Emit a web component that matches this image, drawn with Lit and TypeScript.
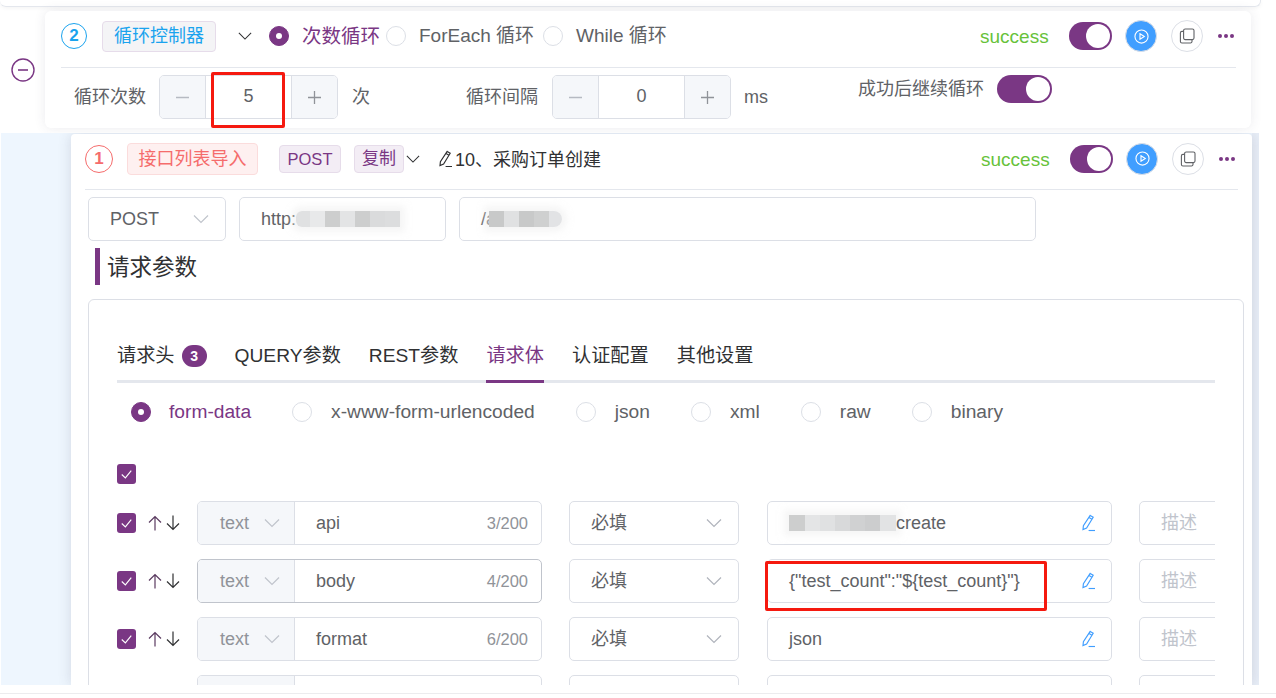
import { LitElement, html, css, svg, nothing } from "lit";
import { customElement } from "lit/decorators.js";

const chevron = (cls = "") => html`<svg class="chev ${cls}" viewBox="0 0 16 16"><polyline points="1,4.5 8,11.5 15,4.5" fill="none" stroke="currentColor" stroke-width="1.2"/></svg>`;
const pencil = (cls = "") => html`<svg class="pencil ${cls}" viewBox="0 0 16 18" fill="none" stroke="currentColor" stroke-width="1.15"><path d="M10.2 1.4 L13.2 3.2 L6.6 14 L3 15.6 L3.4 11.8 Z"/><path d="M9 3.4 L12 5.3"/><path d="M8.6 16.5 H15"/></svg>`;
const copyIcon = html`<svg class="copy" viewBox="0 0 16 16" fill="none" stroke="#606266" stroke-width="1.1"><rect x="4.6" y="1" width="10.4" height="10.6" rx="1.6"/><path d="M4.6 3.4 H3 A1.6 1.6 0 0 0 1.4 5 V13.4 A1.6 1.6 0 0 0 3 15 H11.4 A1.6 1.6 0 0 0 13 13.4 V11.6"/></svg>`;
const playIcon = html`<svg class="play" viewBox="0 0 16 16" fill="none" stroke="#fff" stroke-width="1.2"><circle cx="8" cy="8" r="7"/><path d="M6.4 5 L11 8 L6.4 11 Z"/></svg>`;
const dots = html`<span class="dots"><i></i><i></i><i></i></span>`;
const check = html`<svg viewBox="0 0 20 20" class="tick"><polyline points="5,10.5 8.8,14 15,6.5" fill="none" stroke="#fff" stroke-width="1.2"/></svg>`;
const up = svg`<path d="M7 15.5 V1.5 M1 7.5 L7 1.5 L13 7.5" fill="none" stroke="currentColor" stroke-width="1.2"/>`;
const down = svg`<path d="M7 .5 V14.5 M1 8.5 L7 14.5 L13 8.5" fill="none" stroke="currentColor" stroke-width="1.2"/>`;

@customElement("app-root")
export class AppRoot extends LitElement {
  static styles = css`
    :host { display: block; width: 1276px; height: 698px; overflow: hidden; background: #fff; position: relative;
      font-family: "Liberation Sans", "Noto Sans CJK SC", sans-serif; color: #606266; font-size: 18px; }
    * { box-sizing: border-box; }
    .page { display: flex; flex-direction: column; height: 698px; }
    .top-edge { height: 7px; width: 1261px; flex: none; border: 1px solid #e4e7ed; border-top: 0; border-left: 0; border-radius: 0 0 6px 6px; box-shadow: 0 1px 4px rgba(0,0,0,.05); }
    .loop { display: flex; margin-top: 4px; height: 117px; flex: none; align-items: center; }
    .minus { width: 45px; display: flex; justify-content: center; }
    .minus svg { width: 24px; height: 24px; }
    .card1 { width: 1206px; height: 117px; background: #fff; border-radius: 6px; box-shadow: 0 0 12px rgba(60,60,90,.1); padding: 0 15px 0 16px; }
    .head { display: flex; align-items: center; }
    .h1 { height: 57px; border-bottom: 1px solid #e4e7ed; padding-bottom: 6px; }
    .num { width: 26px; height: 26px; border-radius: 50%; border: 1px solid; display: flex; align-items: center; justify-content: center; font-weight: bold; font-size: 17px; flex: none; }
    .num.blue { color: #1aa3ee; border-color: #1aa3ee; }
    .num.red { color: #f56c6c; border-color: #f56c6c; width: 28px; height: 28px; }
    .tag { border: 1px solid #e6dcea; border-radius: 4px; display: flex; align-items: center; justify-content: center; flex: none; line-height: 22px; }
    .tag.loopt { width: 114px; height: 31px; margin-left: 15px; background: #f4f4f6; color: #1aa3ee; }
    .chev { width: 16px; height: 16px; flex: none; }
    .h1 .chev { width: 14px; margin-left: 22px; color: #303133; }
    .radio { width: 20px; height: 20px; border-radius: 50%; border: 1px solid #dcdfe6; background: #fff; flex: none; display: flex; align-items: center; justify-content: center; }
    .radio.on { background: #7a3784; border-color: #7a3784; }
    .radio.on::after { content: ""; width: 6px; height: 6px; border-radius: 50%; background: #fff; }
    .r1 { margin-left: 17px; }
    .rl { font-size: 19.5px; line-height: 22px; }
    .rl.on { color: #7a3784; margin-left: 13px; margin-right: 6px; width: 78px; white-space: nowrap; }
    .rl.fe { margin-left: 13px; width: 124px; white-space: nowrap; font-size: 19px; }
    .rl.wh { margin-left: 13px; white-space: nowrap; font-size: 19px; }
    .right { margin-left: auto; display: flex; align-items: center; }
    .success { color: #67c23a; font-size: 19px; width: 89px; margin-top: 2px; }
    .switch { width: 43px; height: 28px; border-radius: 14px; background: #7a3784; position: relative; flex: none; }
    .switch::after { content: ""; position: absolute; right: 2px; top: 2px; width: 24px; height: 24px; border-radius: 50%; background: #fff; }
    .switch.w { width: 55px; }
    .btn { width: 32px; height: 32px; border-radius: 50%; display: flex; align-items: center; justify-content: center; flex: none; }
    .btn.p { background: #409eff; margin-left: 13px; border: 1px solid #dcdfe6; }
    .btn.c { margin-left: 14px; border: 1px solid #dcdfe6; background: #fff; }
    .play { width: 15px; height: 15px; }
    .copy { width: 16px; height: 16px; }
    .dots { display: flex; gap: 2px; margin-left: 15px; width: 18px; }
    .dots i { width: 4px; height: 4px; border-radius: 50%; background: #7a3784; display: block; }
    .h3 .dots { margin-right: 1px; }
    .h2 { height: 60px; padding-top: 7px; align-items: flex-start; }
    .h2 > .lbl { line-height: 44px; }
    .lbl1 { margin-left: 13px; width: 85px; flex: none; white-space: nowrap; }
    .stepper { display: flex; width: 179px; height: 44px; border: 1px solid #dcdfe6; border-radius: 5px; flex: none; overflow: hidden; }
    .stepper b { width: 46px; flex: none; background: #f5f7fa; color: #909399; font-weight: normal; display: flex; align-items: center; justify-content: center; font-size: 24px; }
    .stepper b svg { width: 15px; height: 15px; }
    .stepper b:first-child { border-right: 1px solid #dcdfe6; color: #b6bac2; }
    .stepper b:last-child { border-left: 1px solid #dcdfe6; }
    .stepper span { flex: 1; display: flex; align-items: center; justify-content: center; color: #606266; padding-bottom: 2px; }
    .unit1 { margin-left: 14px; width: 114px; flex: none; line-height: 44px; }
    .lbl2 { width: 86px; flex: none; line-height: 44px; white-space: nowrap; }
    .unit2 { margin-left: 13px; width: 114px; flex: none; line-height: 44px; }
    .cont { display: flex; align-items: center; height: 28px; gap: 13px; white-space: nowrap; line-height: 22px; }

    .nested { flex: none; height: 552px; margin-top: 5px; width: 1258px; margin-left: 1px; display: flex; background: #eef6fe; padding-left: 70px; overflow: hidden; }
    .strip { width: 7px; flex: none; background: #e8eef7; }
    .card2 { width: 1181px; flex: none; background: #fff; margin-top: 1px; border-radius: 4px 4px 0 0; box-shadow: 0 0 14px rgba(60,60,90,.16); padding: 0 0 0 14px; position: relative; overflow: hidden; }
    .h3 { height: 56px; border-bottom: 1px solid #e4e7ed; width: 1153px; padding-bottom: 6px; }
    .tag.api { width: 131px; height: 32px; margin-left: 14px; background: #fef0f0; border-color: #fbdcdc; color: #f56c6c; }
    .tag.m { height: 28px; background: #f3edf5; color: #7a3784; font-size: 16.5px; }
    .tag.post { width: 62px; margin-left: 21px; padding-top: 1px; }
    .tag.dup { width: 50px; margin-left: 13px; font-size: 17px; padding-top: 1px; }
    .h3 .chev { width: 14px; margin-left: 2px; color: #303133; }
    .h3 .pencil { width: 16px; height: 18px; margin-left: 17px; color: #303133; }
    .h3 .nm { color: #303133; white-space: nowrap; line-height: 22px; margin: 3px 0 0 2px; }
    .urls { display: flex; margin: 7px 0 0 3px; gap: 13px; }
    .box { height: 44px; border: 1px solid #dcdfe6; border-radius: 5px; display: flex; align-items: center; flex: none; background: #fff; white-space: nowrap; line-height: 22px; }
    .m-sel { width: 138px; padding: 0 16px 0 21px; justify-content: space-between; }
    .m-sel .chev { color: #c0c4cc; }
    .u1 { width: 207px; padding-left: 21px; }
    .u2 { width: 577px; padding-left: 21px; }
    .mosaic { display: inline-block; height: 16px; flex: none; box-shadow: 0 0 6px 5px rgba(238,238,238,.5); }
    .mz1 { width: 104px; border-radius: 6px 0 0 6px; background: linear-gradient(90deg, #e0e1e2 0 14px, #e8e9ea 14px 29px, #cdcece 29px 44px, #e3e4e5 44px 59px, #cdcece 59px 74px, #dadbdc 74px 89px, #dcddde 89px 100%); }
    .mz2 { width: 73px; margin-left: -7px; border-radius: 0 8px 8px 0; background: linear-gradient(90deg, #c8c9c9 0 15px, #e0e1e2 15px 30px, #c8c9c9 30px 45px, #cfd0d0 45px 60px, #e2e3e5 60px 100%); }
    .mz3 { width: 107px; vertical-align: -2px; background: linear-gradient(90deg, #cdcece 0 16px, #e4e5e6 16px 31px, #e0e1e2 31px 46px, #d8d9da 46px 61px, #d0d1d2 61px 76px, #cccdce 76px 91px, #e2e3e4 91px 100%); }
    .title { margin: 7px 0 0 10px; height: 37px; border-left: 5px solid #7a3784; padding-left: 7px; font-size: 22.5px; color: #303133; line-height: 39px; }
    .panel { margin: 14px 0 0 3px; width: 1156px; height: 400px; border: 1px solid #dcdfe6; border-radius: 6px; padding: 37px 0 0 28px; }
    .inner { width: 1098px; overflow: hidden; }
    .tabs { display: flex; gap: 28px; border-bottom: 3px solid #e4e7ed; height: 46px; color: #303133; font-size: 19.2px; }
    .tab { height: 46px; line-height: 38px; border-bottom: 3px solid transparent; white-space: nowrap; display: flex; align-items: flex-start; }
    .tab.on { color: #7a3784; border-bottom-color: #7a3784; }
    .badge { background: #7a3784; color: #fff; font-weight: bold; font-size: 14px; width: 25px; height: 22px; line-height: 22px; border-radius: 11px; text-align: center; margin: 8px 0 0 7px; }
    .types { display: flex; margin-top: 19px; padding-left: 14px; height: 20px; align-items: center; gap: 41px; font-size: 19.2px; }
    .type { display: flex; align-items: center; gap: 19px; white-space: nowrap; line-height: 22px; }
    .type.on { color: #7a3784; gap: 18px; }
    .cb { width: 19px; height: 20px; border-radius: 3px; background: #7a3784; flex: none; display: block; }
    .tick { width: 19px; height: 20px; display: block; }
    .all { margin-top: 42px; height: 20px; }
    .row { display: flex; align-items: center; margin-top: 14px; height: 44px; white-space: nowrap; }
    .all + .row { margin-top: 17px; }
    .arrows { display: flex; width: 61px; padding-left: 12px; gap: 4px; color: #303133; flex: none; }
    .arrows svg { width: 14px; height: 16px; display: block; }
    .arrows svg:first-child { color: #5a3a60; }
    .grp { width: 345px; overflow: hidden; }
    .grp .sel { width: 97px; height: 100%; background: #f5f7fa; border-right: 1px solid #dcdfe6; color: #909399; display: flex; align-items: center; padding: 0 14px 0 22px; justify-content: space-between; flex: none; }
    .grp .sel .chev { color: #c0c4cc; }
    .grp .val { padding-left: 21px; flex: 1; }
    .grp .cnt { color: #909399; font-size: 16.5px; padding-right: 13px; }
    .grp.focus { border-color: #c0c4cc; }
    .req { width: 170px; margin-left: 27px; padding: 0 16px 0 21px; justify-content: space-between; }
    .req .chev { color: #b0b4bc; }
    .valbox { width: 345px; margin-left: 28px; padding: 0 15px 0 21px; justify-content: space-between; }
    .valbox .pencil { width: 16px; height: 18px; color: #409eff; }
    .desc { width: 100px; margin-left: 27px; padding-left: 21px; color: #c0c4cc; }
    .foot { margin-top: 8px; border-top: 1px solid #ececee; flex: 1; }
    .mark { position: absolute; border: 3px solid #f5190f; border-radius: 2px; pointer-events: none; }
    .mark.a { left: 211px; top: 72px; width: 74px; height: 56px; }
    .mark.b { left: 765px; top: 561px; width: 282px; height: 50px; }
  `;

  private renderRow(name: string, count: string, value: unknown, focus = false) {
    return html`<div class="row">
      <span class="cb">${check}</span>
      <span class="arrows"><svg viewBox="0 0 14 16">${up}</svg><svg viewBox="0 0 14 16">${down}</svg></span>
      <div class="box grp ${focus ? "focus" : ""}">
        <div class="sel"><span>text</span>${chevron()}</div>
        <span class="val">${name}</span><span class="cnt">${count}</span>
      </div>
      <div class="box req"><span>必填</span>${chevron()}</div>
      <div class="box valbox"><span>${value}</span>${pencil()}</div>
      <div class="box desc">描述</div>
    </div>`;
  }

  private emptyRow() {
    return html`<div class="row">
      <span class="cb"></span>
      <span class="arrows"></span>
      <div class="box grp"><div class="sel">${nothing}</div></div>
      <div class="box req"></div>
      <div class="box valbox"></div>
      <div class="box desc"></div>
    </div>`;
  }

  private stepper(v: string) {
    return html`<div class="stepper">
      <b><svg viewBox="0 0 15 15"><path d="M1 7.5 H14" stroke="currentColor" stroke-width="1.3"/></svg></b>
      <span>${v}</span>
      <b><svg viewBox="0 0 15 15"><path d="M1 7.5 H14 M7.5 1 V14" stroke="currentColor" stroke-width="1.3"/></svg></b>
    </div>`;
  }

  private actions() {
    return html`<div class="right">
      <span class="success">success</span>
      <span class="switch"></span>
      <span class="btn p">${playIcon}</span>
      <span class="btn c">${copyIcon}</span>
      ${dots}
    </div>`;
  }

  render() {
    return html`<div class="page">
      <div class="top-edge"></div>
      <div class="loop">
        <div class="minus"><svg viewBox="0 0 24 24" fill="none" stroke="#7a3784" stroke-width="1.4"><circle cx="12" cy="12" r="11"/><path d="M7 12 H17" stroke-width="1.6"/></svg></div>
        <div class="card1">
          <div class="head h1">
            <span class="num blue">2</span>
            <span class="tag loopt">循环控制器</span>
            ${chevron()}
            <span class="radio on r1"></span><span class="rl on">次数循环</span>
            <span class="radio"></span><span class="rl fe">ForEach 循环</span>
            <span class="radio"></span><span class="rl wh">While 循环</span>
            ${this.actions()}
          </div>
          <div class="head h2">
            <span class="lbl lbl1">循环次数</span>
            ${this.stepper("5")}
            <span class="unit1">次</span>
            <span class="lbl2">循环间隔</span>
            ${this.stepper("0")}
            <span class="unit2">ms</span>
            <span class="cont"><span>成功后继续循环</span><span class="switch w"></span></span>
          </div>
        </div>
      </div>
      <div class="nested">
        <div class="card2">
          <div class="head h3">
            <span class="num red">1</span>
            <span class="tag api">接口列表导入</span>
            <span class="tag m post">POST</span>
            <span class="tag m dup">复制</span>
            ${chevron()}
            ${pencil()}
            <span class="nm">10、采购订单创建</span>
            ${this.actions()}
          </div>
          <div class="urls">
            <div class="box m-sel"><span>POST</span>${chevron()}</div>
            <div class="box u1"><span>http:</span><span class="mosaic mz1"></span></div>
            <div class="box u2"><span>/a</span><span class="mosaic mz2"></span></div>
          </div>
          <div class="title">请求参数</div>
          <div class="panel">
            <div class="inner">
              <div class="tabs">
                <div class="tab">请求头<span class="badge">3</span></div>
                <div class="tab">QUERY参数</div>
                <div class="tab">REST参数</div>
                <div class="tab on">请求体</div>
                <div class="tab">认证配置</div>
                <div class="tab">其他设置</div>
              </div>
              <div class="types">
                <div class="type on"><span class="radio on"></span>form-data</div>
                <div class="type"><span class="radio"></span>x-www-form-urlencoded</div>
                <div class="type"><span class="radio"></span>json</div>
                <div class="type"><span class="radio"></span>xml</div>
                <div class="type"><span class="radio"></span>raw</div>
                <div class="type"><span class="radio"></span>binary</div>
              </div>
              <div class="all"><span class="cb">${check}</span></div>
              ${this.renderRow("api", "3/200", html`<span class="mosaic mz3"></span>create`)}
              ${this.renderRow("body", "4/200", '{"test_count":"${test_count}"}', true)}
              ${this.renderRow("format", "6/200", "json")}
              ${this.emptyRow()}
            </div>
          </div>
        </div>
        <div class="strip"></div>
      </div>
      <div class="foot"></div>
    </div>
    <div class="mark a"></div>
    <div class="mark b"></div>`;
  }
}
